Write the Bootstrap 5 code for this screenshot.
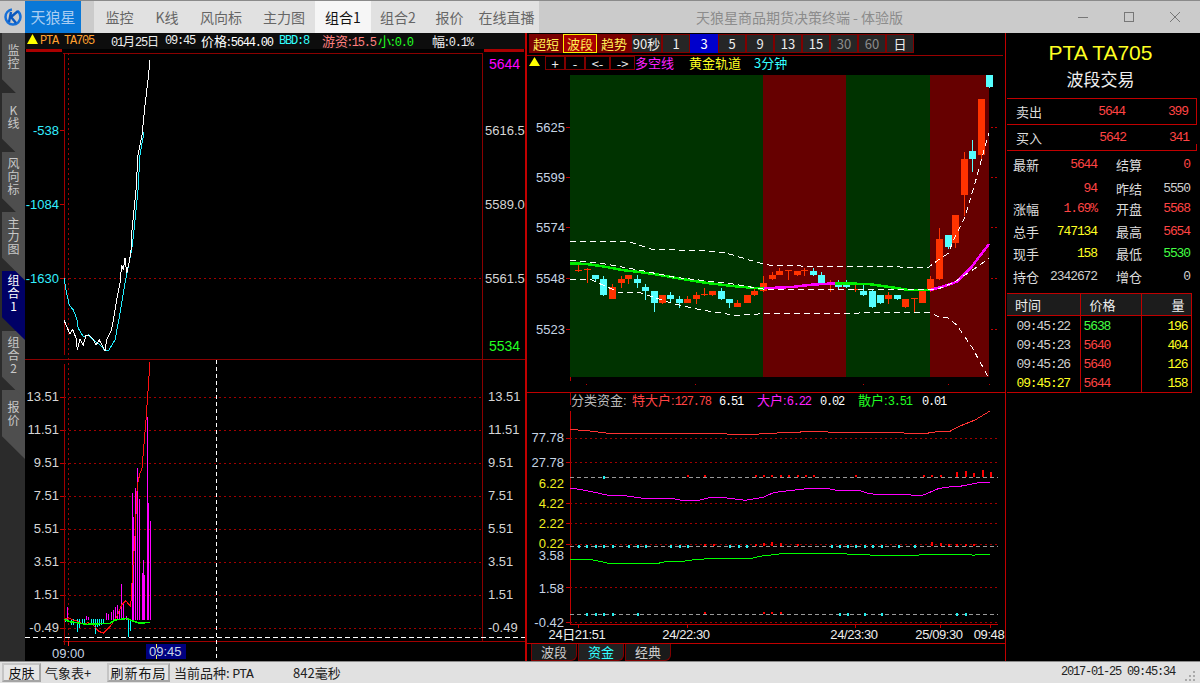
<!DOCTYPE html>
<html lang="zh-CN">
<head>
    <meta charset="UTF-8">
    <title>天狼星商品期货决策终端</title>
    <link href="https://cdn.jsdelivr.net/npm/bootstrap@5.3.0/dist/css/bootstrap.min.css" rel="stylesheet">
    <style>
        html, body { height: 100%; }
        body {
            margin: 0; width: 1200px; height: 683px; overflow: hidden; background: #000;
            font-family: "Liberation Sans", "Noto Sans CJK SC", sans-serif; font-size: 13px;
        }
        .cn { font-family: "Noto Sans CJK SC", "Liberation Sans", sans-serif; }
        .mono { font-family: "Liberation Mono", "Noto Sans CJK SC", monospace; font-size: 13px; letter-spacing: -1.1px; }

        /* title bar */
        .titlebar { height: 33px; background: #cbcbcb; border-top: 1px solid #8a8a8a; flex: none; }
        .logo-box { width: 25px; }
        .brand { width: 56px; background: #0a78d7; color: #a8cdf2; font-size: 15px; line-height: 32px; text-align: center; }
        .top-tabs { margin-left: 13px; background: #e1e1e1; flex-wrap: nowrap; }
        .top-tabs .nav-link { padding: 0; line-height: 32px; color: #666; font-size: 14px; text-align: center; border-radius: 0; }
        .top-tabs .nav-link.active { background: #f6f6f6; color: #111; }
        .t1 { width: 51px; } .t2 { width: 44px; } .t3 { width: 64px; } .t4 { width: 62px; }
        .t5 { width: 56px; } .t6 { width: 54px; } .t7 { width: 49px; } .t8 { width: 65px; }
        .app-title { width: 521px; text-align: center; color: #8c8c8c; font-size: 14px; line-height: 32px; }
        .win-btns { width: 140px; }
        .win-btn { width: 46px; height: 32px; }

        /* left rail */
        .rail { width: 25px; flex: none; background: #2b2b2b; padding-left: 2px; flex-wrap: nowrap; }
        .rail .nav-link {
            height: 69px; margin-bottom: -9.5px; background: #4e4e4e; color: #c8c8c8;
            font-size: 12px; line-height: 13px; text-align: center; padding: 4px 0 0; border-radius: 0;
            clip-path: polygon(0 0, 100% 0, 100% 100%, 0 67%); position: relative;
        }
        .rail .nav-link.active { background: #000066; color: #fff; padding-top: 2px; }
        .rail .rail-two { padding-top: 10px; }
        .rail-z1 { z-index: 7; } .rail-z2 { z-index: 6; } .rail-z3 { z-index: 5; } .rail-z4 { z-index: 4; }
        .rail-z5 { z-index: 3; } .rail-z6 { z-index: 2; } .rail-z7 { z-index: 1; }

        /* left chart panel */
        .left-panel { width: 500px; flex: none; }
        .head-row { height: 16px; background: #0d0d0d; color: #fff; font-size: 13px; line-height: 16px; white-space: nowrap; }
        .head-row .mono { font-size: 12px; letter-spacing: -1.2px; }
        .h-tri { width: 15px; padding-left: 2px; }
        .h-code { width: 71px; color: #ffa030; }
        .h-date { width: 54px; color: #eee; font-size: 12px; }
        .h-time { width: 36px; color: #eee; }
        .h-price { width: 78px; }
        .h-bbd { width: 43px; color: #33ffff; }
        .h-you { width: 56px; color: #ff8080; }
        .h-small { width: 54px; color: #22ff22; }
        .h-fu { color: #eee; }
        svg text { font-family: "Liberation Sans", "Noto Sans CJK SC", sans-serif; font-size: 13px; }
        svg { display: block; }
        .ax { fill: #d5d5d5; }
        .ax-b { fill: #c6d4e4; }
        .ax-y { fill: #f0f020; }
        .ax-c { fill: #33eeff; }
        .ax-x { fill: #eee; letter-spacing: -0.4px; }
        svg .num-s { font-family: "Liberation Mono", monospace; font-size: 12px; letter-spacing: -1.2px; }

        /* right chart panel */
        .mid-panel { width: 481px; flex: none; border-left: 2px solid #c00000; border-right: 1px solid #c00000; }
        .bar-one { height: 22px; padding: 1px 0 0 2px; flex: none; }
        .tf-btn {
            padding: 0; border-radius: 0; height: 19px; line-height: 16px; font-size: 13px; color: #eee; width: 28px;
            background: #262626; border: 1px solid #800000;
        }
        .tf-wide { width: 31px; }
        .tf-off { color: #8c8c8c; }
        .tf-on { background: #0000cc; border-color: #0000cc; color: #fff; }
        .tf-red { background: #7a0000; border-color: #7a0000; color: #ffee55; width: 34px; }
        .tf-sel { background: #aa0000; border-color: #ffee00; color: #ffee55; }
        .bar-two { height: 15px; flex: none; margin-right: 2px; border-top: 1px solid #990000; padding-left: 2px; line-height: 14px; white-space: nowrap; }
        .sm-btn {
            padding: 0; border-radius: 0; width: 20px; height: 14px; line-height: 11px; font-size: 13px; color: #eee;
            background: #000; border: 1px solid #800000;
        }
        .sm-wide { width: 25px; }
        .bar-tri { width: 16px; }
        .l-duo { width: 54px; color: #ff22ff; }
        .l-gold { width: 65px; color: #ffff22; }
        .l-min { color: #33ffff; }
        .bottom-tabs { height: 18px; flex: none; border-top: 1px solid #c00000; padding-left: 4px; gap: 1px; flex-wrap: nowrap; }
        .bottom-tabs .nav-link {
            padding: 0; width: 46px; height: 17px; line-height: 15px; font-size: 13px; text-align: center; color: #ccc;
            background: #1a1a1a; border: 1px solid #800000; border-top: 0; border-radius: 0 0 6px 0;
        }
        .bottom-tabs .nav-link.active { color: #33ffff; background: #222; }

        /* quote column */
        .side-panel { width: 193px; flex: none; color: #ddd; }
        .sym { height: 65px; padding-top: 9px; text-align: center; color: #ffff22; font-family: "Liberation Sans", sans-serif; font-size: 21px; line-height: 22px; padding-right: 4px; }
        .sym-sub { color: #eee; font-family: "Noto Sans CJK SC", sans-serif; font-size: 17px; line-height: 30px; }
        .quote-box { height: 27px; margin: 0 2px 0 1px; border: 1px solid #c00000; border-left: 0; padding: 0 8px 0 9px; line-height: 25px; }
        .quote-two { height: 26px; border-top: 0; border-right: 0; position: relative; }
        .quote-two::after { content: ""; position: absolute; right: 0; bottom: 0; height: 6px; border-right: 1px solid #c00000; }
        .q-val { width: 60px; text-align: right; }
        .q-vol { width: 63px; text-align: right; }
        .red-t { color: #ff4444; }
        .yel-t { color: #ffff22; }
        .grn-t { color: #44ff44; }
        .gry-t { color: #cfcfcf; }
        .stat-grid {
            display: grid; margin-top: 2px; padding-left: 7px; height: 140px; align-items: center;
            grid-template-columns: 34px 50px 53px 40px; grid-template-rows: 24px 24px 16px 30px 14px 32px;
            white-space: nowrap;
        }
        .stat-label2 { padding-left: 19px; }
        .tick-table { width: 184px; margin: 0 0 0 1px; table-layout: fixed; --bs-table-bg: transparent; --bs-table-color: #ddd; }
        .tick-table > :not(caption) > * > * { padding: 2px 0 0; height: 19px; line-height: 17px; border: 1px solid #c00000; border-width: 0 1px 0 0; background: transparent; box-shadow: none; }
        .tick-table thead th { height: 22px; padding: 0; background: #1c1c1c; font-weight: 400; border-width: 1px 1px 1px 0; font-size: 13px; line-height: 20px; color: #eee; }
        .tick-table tbody tr:last-child td { border-bottom-width: 1px; }
        .w-time { width: 73px; } .w-price { width: 61px; } .w-vol { width: 50px; }
        .tick-table td.red-t { color: #ff4444; }
        .tick-table td.yel-t { color: #ffff22; }
        .tick-table td.grn-t { color: #44ff44; }
        .tick-table td.gry-t { color: #cfcfcf; }
        .tick-table thead .h-time-cell { padding-left: 8px; }
        .tick-table thead .h-price-cell { padding-left: 9px; }
        .tick-table thead .h-vol-cell { padding-right: 6px; text-align: right; }
        .cell-time { text-align: center; }
        .tick-table td.cell-price { padding-left: 3px; }
        .tick-table td.cell-vol { text-align: right; padding-right: 3px; }

        /* status bar */
        .statusbar { height: 22px; flex: none; background: #e1e1e1; border-top: 1px solid #8a8a8a; color: #222; font-size: 13px; line-height: 21px; padding-left: 2px; white-space: nowrap; }
        .st-btn { padding: 0; border-radius: 0; height: 19px; line-height: 15px; margin-top: 1px; font-size: 13px; color: #111; background: #e6e6e6; border: 2px solid #a5a5a5; border-left-color: #c5c5c5; border-top-color: #c5c5c5; }
        .st-skin { width: 39px; }
        .st-refresh { width: 63px; letter-spacing: 1px; margin-left: 0; }
        .st-wx { width: 66px; padding-left: 4px; }
        .st-cur { width: 123px; padding-left: 4px; }
        .st-ms { width: 80px; }
        .statusbar .st-clock { margin-left: auto; width: 123px; color: #222; font-size: 12px; letter-spacing: -1.2px; }
    </style>
</head>
<body class="d-flex flex-column">

    <div class="titlebar d-flex">
        <div class="logo-box d-flex align-items-center justify-content-center">
            <svg width="20" height="20" viewBox="0 0 20 20">
                <circle cx="10" cy="10" r="7.5" fill="none" stroke="#1670d8" stroke-width="2.5" stroke-dasharray="34 6"/>
                <path d="M8 5 L6 15 M15 4 L8 10 L13 16" fill="none" stroke="#0a58c0" stroke-width="2.4"/>
            </svg>
        </div>
        <div class="brand cn">天狼星</div>
        <ul class="nav top-tabs cn">
            <li class="nav-item t1"><a class="nav-link" href="#">监控</a></li>
            <li class="nav-item t2"><a class="nav-link" href="#">K线</a></li>
            <li class="nav-item t3"><a class="nav-link" href="#">风向标</a></li>
            <li class="nav-item t4"><a class="nav-link" href="#">主力图</a></li>
            <li class="nav-item t5"><a class="nav-link active" href="#">组合1</a></li>
            <li class="nav-item t6"><a class="nav-link" href="#">组合2</a></li>
            <li class="nav-item t7"><a class="nav-link" href="#">报价</a></li>
            <li class="nav-item t8"><a class="nav-link" href="#">在线直播</a></li>
        </ul>
        <div class="app-title cn">天狼星商品期货决策终端 - 体验版</div>
        <div class="win-btns d-flex">
            <div class="win-btn d-flex align-items-center justify-content-center">
                <svg width="12" height="12"><path d="M1 6.5H11" stroke="#777" fill="none"/></svg>
            </div>
            <div class="win-btn d-flex align-items-center justify-content-center">
                <svg width="12" height="12"><rect x="1.5" y="1.5" width="9" height="9" stroke="#777" fill="none"/></svg>
            </div>
            <div class="win-btn d-flex align-items-center justify-content-center">
                <svg width="12" height="12"><path d="M1 1L11 11M11 1L1 11" stroke="#777" fill="none"/></svg>
            </div>
        </div>
    </div>

    <div class="d-flex flex-grow-1">
        <ul class="nav flex-column rail cn">
            <li class="nav-item"><a class="nav-link rail-z1 rail-two" href="#">监<br>控</a></li>
            <li class="nav-item"><a class="nav-link rail-z2 rail-two" href="#">K<br>线</a></li>
            <li class="nav-item"><a class="nav-link rail-z3" href="#">风<br>向<br>标</a></li>
            <li class="nav-item"><a class="nav-link rail-z4" href="#">主<br>力<br>图</a></li>
            <li class="nav-item"><a class="nav-link active rail-z5" href="#">组<br>合<br>1</a></li>
            <li class="nav-item"><a class="nav-link rail-z6" href="#">组<br>合<br>2</a></li>
            <li class="nav-item"><a class="nav-link rail-z7 rail-two" href="#">报<br>价</a></li>
        </ul>

        <div class="left-panel d-flex flex-column">
            <div class="head-row d-flex cn">
                <span class="h-tri"><svg width="12" height="12"><path d="M0 11L5.5 1L11 11Z" fill="#ffff00"/></svg></span>
                <span class="h-code mono">PTA TA705</span>
                <span class="h-date"><span class="mono">01</span>月<span class="mono">25</span>日</span>
                <span class="h-time mono">09:45</span>
                <span class="h-price">价格:<span class="mono">5644.00</span></span>
                <span class="h-bbd mono">BBD:8</span>
                <span class="h-you">游资:<span class="mono">15.5</span></span>
                <span class="h-small">小:<span class="mono">0.0</span></span>
                <span class="h-fu">幅:<span class="mono">0.1%</span></span>
            </div>
            <svg id="leftChart" width="500" height="612" viewBox="25 49 500 612" shape-rendering="crispEdges">
                <rect x="26" y="49" width="36" height="3" fill="#aa0000"/>
                <rect x="484" y="49" width="40" height="3" fill="#aa0000"/>
                <text class="ax-c" x="59" y="135" text-anchor="end">-538</text>
                <text class="ax-c" x="59" y="209" text-anchor="end">-1084</text>
                <text class="ax-c" x="59" y="283" text-anchor="end">-1630</text>
                <text x="489" y="69" fill="#ff00ff" style="font-size:14px">5644</text>
                <text class="ax" x="485" y="135">5616.5</text>
                <text class="ax" x="485" y="209">5589.0</text>
                <text class="ax" x="485" y="283">5561.5</text>
                <text x="489" y="351" fill="#22ff22" style="font-size:14px">5534</text>
                <text class="ax" x="59" y="401" text-anchor="end">13.51</text>
                <text class="ax" x="59" y="434" text-anchor="end">11.51</text>
                <text class="ax" x="59" y="467" text-anchor="end">9.51</text>
                <text class="ax" x="59" y="500" text-anchor="end">7.51</text>
                <text class="ax" x="59" y="533" text-anchor="end">5.51</text>
                <text class="ax" x="59" y="566" text-anchor="end">3.51</text>
                <text class="ax" x="59" y="599" text-anchor="end">1.51</text>
                <text class="ax" x="59" y="632" text-anchor="end">-0.49</text>
                <text class="ax" x="488" y="401">13.51</text>
                <text class="ax" x="488" y="434">11.51</text>
                <text class="ax" x="488" y="467">9.51</text>
                <text class="ax" x="488" y="500">7.51</text>
                <text class="ax" x="488" y="533">5.51</text>
                <text class="ax" x="488" y="566">3.51</text>
                <text class="ax" x="488" y="599">1.51</text>
                <text class="ax" x="488" y="632">-0.49</text>
                <text class="ax-b" x="52" y="658">09:00</text>
                <rect x="146" y="644" width="40" height="15" fill="#000080"/>
                <text class="ax-b" x="149" y="656">09:45</text>
                <rect x="7" y="645" width="16" height="15" fill="#444" stroke="#999"/>
                <path d="M13 649L18 652.5L13 656Z" fill="#000"/>
                <g id="leftDraw"></g>
            </svg>
        </div>

        <div class="mid-panel d-flex flex-column">
            <div class="bar-one d-flex cn">
                <button class="btn tf-btn tf-red">超短</button>
                <button class="btn tf-btn tf-red tf-sel">波段</button>
                <button class="btn tf-btn tf-red">趋势</button>
                <button class="btn tf-btn tf-wide">90秒</button>
                <button class="btn tf-btn">1</button>
                <button class="btn tf-btn tf-on">3</button>
                <button class="btn tf-btn">5</button>
                <button class="btn tf-btn">9</button>
                <button class="btn tf-btn">13</button>
                <button class="btn tf-btn">15</button>
                <button class="btn tf-btn tf-off">30</button>
                <button class="btn tf-btn tf-off">60</button>
                <button class="btn tf-btn">日</button>
            </div>
            <div class="bar-two d-flex cn">
                <span class="bar-tri"><svg width="12" height="12"><path d="M0 10L5.5 1L11 10Z" fill="#ffff00"/></svg></span>
                <button class="btn sm-btn">+</button>
                <button class="btn sm-btn">-</button>
                <button class="btn sm-btn sm-wide">&lt;-</button>
                <button class="btn sm-btn sm-wide">-&gt;</button>
                <span class="l-duo">多空线</span>
                <span class="l-gold">黄金轨道</span>
                <span class="l-min">3分钟</span>
            </div>
            <svg id="midChart" width="478" height="573" viewBox="527 70 478 573" shape-rendering="crispEdges">
                <rect x="570" y="75" width="193" height="302" fill="#003300"/>
                <rect x="763" y="75" width="83" height="302" fill="#660000"/>
                <rect x="846" y="75" width="84" height="302" fill="#003300"/>
                <rect x="930" y="75" width="59" height="302" fill="#660000"/>
                <text class="ax-b" x="565" y="132" text-anchor="end">5625</text>
                <text class="ax-b" x="565" y="182" text-anchor="end">5599</text>
                <text class="ax-b" x="565" y="232" text-anchor="end">5574</text>
                <text class="ax-b" x="565" y="283" text-anchor="end">5548</text>
                <text class="ax-b" x="565" y="334" text-anchor="end">5523</text>
                <text x="571" y="405" fill="#bbb">分类资金:</text>
                <text x="632" y="405" fill="#ff4444">特大户:<tspan class="num-s">127.78</tspan></text>
                <text x="719" y="405" fill="#fff" class="num-s">6.51</text>
                <text x="757" y="405" fill="#ff22ff">大户:<tspan class="num-s">6.22</tspan></text>
                <text x="820" y="405" fill="#fff" class="num-s">0.02</text>
                <text x="858" y="405" fill="#22ff22">散户:<tspan class="num-s">3.51</tspan></text>
                <text x="922" y="405" fill="#fff" class="num-s">0.01</text>
                <text class="ax-b" x="564" y="442" text-anchor="end">77.78</text>
                <text class="ax-b" x="564" y="467" text-anchor="end">27.78</text>
                <text class="ax-y" x="564" y="488" text-anchor="end">6.22</text>
                <text class="ax-y" x="564" y="508" text-anchor="end">4.22</text>
                <text class="ax-y" x="564" y="528" text-anchor="end">2.22</text>
                <text class="ax-y" x="564" y="548" text-anchor="end">0.22</text>
                <text class="ax-b" x="564" y="560" text-anchor="end">3.58</text>
                <text class="ax-b" x="564" y="593" text-anchor="end">1.58</text>
                <text class="ax-b" x="564" y="627" text-anchor="end">-0.42</text>
                <text class="ax-x" x="577" y="639" text-anchor="middle">24日21:51</text>
                <text class="ax-x" x="686" y="639" text-anchor="middle">24/22:30</text>
                <text class="ax-x" x="854" y="639" text-anchor="middle">24/23:30</text>
                <text class="ax-x" x="939" y="639" text-anchor="middle">25/09:30</text>
                <text class="ax-x" x="989" y="639" text-anchor="middle">09:48</text>
                <g id="midDraw"></g>
            </svg>
            <ul class="nav bottom-tabs cn">
                <li class="nav-item"><a class="nav-link" href="#">波段</a></li>
                <li class="nav-item"><a class="nav-link active" href="#">资金</a></li>
                <li class="nav-item"><a class="nav-link" href="#">经典</a></li>
            </ul>
        </div>

        <div class="side-panel cn">
            <div class="sym">PTA TA705<div class="sym-sub">波段交易</div></div>
            <div class="quote-box d-flex">
                <span class="flex-grow-1">卖出</span>
                <span class="q-val mono red-t">5644</span>
                <span class="q-vol mono red-t">399</span>
            </div>
            <div class="quote-box quote-two d-flex">
                <span class="flex-grow-1">买入</span>
                <span class="q-val mono red-t">5642</span>
                <span class="q-vol mono red-t">341</span>
            </div>
            <div class="stat-grid">
                <span>最新</span><span class="mono red-t text-end">5644</span><span class="stat-label2">结算</span><span class="mono red-t text-end">0</span>
                <span></span><span class="mono red-t text-end">94</span><span class="stat-label2">昨结</span><span class="mono gry-t text-end">5550</span>
                <span>涨幅</span><span class="mono red-t text-end">1.69%</span><span class="stat-label2">开盘</span><span class="mono red-t text-end">5568</span>
                <span>总手</span><span class="mono yel-t text-end">747134</span><span class="stat-label2">最高</span><span class="mono red-t text-end">5654</span>
                <span>现手</span><span class="mono yel-t text-end">158</span><span class="stat-label2">最低</span><span class="mono grn-t text-end">5530</span>
                <span>持仓</span><span class="mono gry-t text-end">2342672</span><span class="stat-label2">增仓</span><span class="mono gry-t text-end">0</span>
            </div>
            <table class="table tick-table">
                <colgroup><col class="w-time"><col class="w-price"><col class="w-vol"></colgroup>
                <thead>
                    <tr><th class="h-time-cell">时间</th><th class="h-price-cell">价格</th><th class="h-vol-cell">量</th></tr>
                </thead>
                <tbody class="mono">
                    <tr><td class="cell-time gry-t">09:45:22</td><td class="cell-price grn-t">5638</td><td class="cell-vol yel-t">196</td></tr>
                    <tr><td class="cell-time gry-t">09:45:23</td><td class="cell-price red-t">5640</td><td class="cell-vol yel-t">404</td></tr>
                    <tr><td class="cell-time gry-t">09:45:26</td><td class="cell-price red-t">5640</td><td class="cell-vol yel-t">126</td></tr>
                    <tr><td class="cell-time yel-t">09:45:27</td><td class="cell-price red-t">5644</td><td class="cell-vol yel-t">158</td></tr>
                </tbody>
            </table>
        </div>
    </div>

    <div class="statusbar d-flex cn">
        <button class="btn st-btn st-skin">皮肤</button>
        <span class="st-wx">气象表+</span>
        <button class="btn st-btn st-refresh">刷新布局</button>
        <span class="st-cur">当前品种: <span class="mono">PTA</span></span>
        <span class="st-ms">842毫秒</span>
        <span class="st-clock mono">2017-01-25 09:45:34</span>
        <svg class="me-1 mt-2" width="12" height="12"><path d="M9 1h2v2H9zM5 5h2v2H5zM9 5h2v2H9zM1 9h2v2H1zM5 9h2v2H5zM9 9h2v2H9z" fill="#aaa"/></svg>
    </div>

    <script src="https://cdn.jsdelivr.net/npm/bootstrap@5.3.0/dist/js/bootstrap.bundle.min.js"></script>
    <script>
        // chart shapes, coordinates measured off the screenshot
        function line(pts, ox, oy, color, w, dash) {
            var p = pts.map(function (q) { return (ox + q[0] / 3).toFixed(1) + ',' + (oy + q[1] / 3).toFixed(1); }).join(' ');
            return '<polyline points="' + p + '" fill="none" stroke="' + color + '" stroke-width="' + (w || 1) + '"' +
                (dash ? ' stroke-dasharray="' + dash + '"' : '') + '/>';
        }
        function rect(x, y, w, h, c) {
            return '<rect x="' + x + '" y="' + y + '" width="' + w + '" height="' + h + '" fill="' + c + '"/>';
        }
        function hdots(y, x1, x2) { return line([[x1 * 3, y * 3], [x2 * 3, y * 3]], 0, 0.5, '#a00000', 1, '2 3'); }

        // left chart
        var out = '';
        out += rect(63, 53, 419, 1, '#8a0000') + rect(482, 53, 1, 588, '#8a0000');
        out += rect(64, 53, 1, 302, '#a00000') + rect(64, 364, 1, 281, '#a00000');
        out += rect(25, 359, 500, 1, '#8a0000') + rect(63, 641, 462, 1, '#a00000');
        out += line([[68 * 3, 53 * 3], [68 * 3, 641 * 3]], 0, 0, '#a00000', 1, '2 3');
        out += hdots(278, 64, 482);
        [130, 204, 278, 397, 430, 463, 496, 529, 562, 595, 628].forEach(function (y) {
            if (y > 360) out += hdots(y, 64, 482);
            out += rect(60, y, 4, 1, '#c00000');
        });
        out += line([[216 * 3, 360 * 3], [216 * 3, 661 * 3]], 0, 0, '#fff', 1, '4 3');
        out += line([[25 * 3, 637 * 3], [525 * 3, 637 * 3]], 0, 0, '#fff', 1, '5 3');
        out += rect(68, 641, 1, 5, '#ff2020') + rect(156, 644, 1, 4, '#ffee55') + rect(156, 655, 1, 4, '#ffee55');

        var white = [[12,270],[20,290],[30,312],[38,298],[48,325],[52,360],[60,328],[70,345],[78,315],[88,315],[100,328],[108,345],[118,330],[128,350],[135,362],[140,330],[155,298],[165,240],[172,200],[180,160],[185,105],[190,120],[195,85],[200,130],[208,95],[213,60],[216,0],[228,-120],[234,-225],[246,-285],[255,-375],[264,-450],[270,-510]];
        var cyan = [[12,145],[18,180],[28,225],[40,240],[50,265],[55,295],[70,320],[85,315],[100,330],[115,340],[125,350],[135,362],[147,360],[165,330],[180,250],[195,160],[205,110],[215,60],[222,0],[234,-120],[240,-225],[252,-294]];
        out += line(cyan, 60, 230, '#22eeff') + line(white, 60, 230, '#fff');

        var mag = [[22,410],[78,438],[85,442],[138,428],[145,432],[152,425],[158,420],[164,410],[172,405],[178,418],[184,342],[190,400],[198,438],[217,70],[220,140],[226,55],[232,-6],[238,88],[245,310],[248,270],[253,315],[260,-160],[265,100],[271,153]];
        mag.forEach(function (b) {
            var y = Math.round(470 + b[1] / 3);
            out += rect(Math.round(60 + b[0] / 3), y, 1, 620 - y, '#ff00ff');
        });
        var cy = [[16,455],[32,465],[38,465],[52,485],[58,475],[65,460],[72,458],[92,458],[98,465],[106,492],[112,470],[118,468],[124,465],[130,462],[205,500],[211,483]];
        cy.forEach(function (b) {
            out += rect(Math.round(60 + b[0] / 3), 619, 1, Math.round(470 + b[1] / 3) - 619, '#00ffff');
        });
        out += line([[15,448],[25,443],[40,450],[50,452],[70,462],[85,458],[100,465],[115,483],[130,490],[150,470],[170,440],[185,405],[197,392],[212,410],[218,300],[225,200],[232,45],[240,10],[246,-5],[258,-150],[270,-324]], 60, 470, '#ff1010');
        out += line([[12,448],[30,455],[60,460],[80,463],[100,462],[150,460],[165,450],[190,447],[200,445],[215,452],[240,460],[255,458],[270,457]], 60, 470, '#00ff00', 1.5);
        document.getElementById('leftDraw').innerHTML = out;

        // candles: x, body top, body bottom, wick top, wick bottom, red?
        var early = [[160,90,93,72,96,1],[185,88,91,85,130,1],[211,105,118,105,125,0],[235,117,165,108,168,0],[262,141,177,132,178,1],[287,117,130,108,143,1],[310,105,117,105,132,1],[337,117,130,105,143,0],[361,141,153,132,180,0],[386,153,189,153,215,0],[412,165,189,165,191,1],[436,165,177,156,190,0],[462,177,189,168,204,0],[487,177,189,168,190,1],[512,165,177,156,191,1],[537,163,165,144,167,1],[562,153,165,153,167,1],[589,153,177,144,180,0],[613,177,189,177,204,0],[637,189,201,180,202,1],[665,165,189,165,190,1],[688,153,165,145,167,1],[715,129,153,108,155,1],[740,105,117,96,120,1],[763,93,105,84,106,1],[790,90,92,90,120,1],[815,93,105,93,107,1],[838,90,92,84,107,1],[865,93,105,84,107,0],[889,105,129,96,132,0],[916,127,129,120,155,1],[940,129,141,120,146,0],[964,129,141,120,144,0],[990,147,150,129,155,1],[1015,153,165,132,168,0],[1042,153,201,147,204,0],[1066,165,189,165,192,0],[1090,165,177,156,192,1],[1117,165,177,165,180,0],[1141,177,201,177,203,1],[1168,174,177,174,216,1],[1192,153,189,150,190,1],[1216,117,153,108,155,1]];
        var late = [[178,537,657,504,660,1],[203,525,561,525,567,0],[226,465,549,465,564,1],[253,297,405,276,468,1],[277,273,297,240,336,0],[304,117,285,117,300,1],[328,45,81,45,84,0]];
        var m = '';
        [127, 177, 227, 278, 329].forEach(function (y) {
            m += rect(566, y, 4, 1, '#c00000') + line([[991 * 3, y * 3], [998 * 3, y * 3]], 0, 0, '#c00000', 1, '2 2');
        });
        function candle(c, ox, oy) {
            var x = Math.round(ox + c[0] / 3), col = c[5] ? '#ff3300' : '#55ffff';
            var t = Math.round(oy + c[1] / 3), b = Math.round(oy + c[2] / 3);
            var wt = Math.round(oy + c[3] / 3), wb = Math.round(oy + c[4] / 3);
            return rect(x, wt, 1, wb - wt, col) + rect(x - 3, t, 7, Math.max(b - t, 1), col);
        }
        early.forEach(function (c) { m += candle(c, 525, 240); });
        late.forEach(function (c) { m += candle(c, 880, 60); });

        // moving average, green then magenta stretches
        m += line([[135,70],[185,72],[240,80],[290,90],[350,97],[400,104],[460,115],[540,128],[620,138],[700,145],[716,145]], 525, 240, '#00ee00', 2.5);
        m += line([[716,145],[800,141],[860,134],[930,130]], 525, 240, '#ff00ff', 2.5);
        m += line([[930,130],[1030,132],[1100,142],[1150,150],[1215,150]], 525, 240, '#00ee00', 2.5);
        m += line([[1215,150],[1260,138],[1295,125],[1340,80],[1392,12]], 525, 240, '#ff00ff', 2.5);

        // bands
        var dash = '6 4';
        m += line([[135,60],[240,72],[330,88],[450,112],[610,130],[700,145],[720,148],[1210,150],[1240,147],[1290,125]], 525, 240, '#fff', 1, dash);
        m += line([[1290,125],[1320,105],[1350,85],[1392,55]], 525, 240, '#fff', 1, dash);
        m += line([[135,118],[200,120],[280,156],[340,156],[380,170],[440,190],[530,210],[630,226],[700,222],[1215,217],[1240,230],[1270,234],[1295,255],[1340,320],[1392,415]], 525, 240, '#fff', 1, dash);
        m += line([[135,5],[220,3],[305,3],[380,28],[530,32],[600,38],[700,68],[740,77],[1210,82],[1240,60],[1270,40],[1290,-10],[1320,-70],[1350,-170],[1380,-280],[1392,-320]], 525, 240, '#fff', 1, dash);

        // money flow
        m += rect(527, 392, 478, 1, '#c00000') + rect(570, 393, 1, 12, '#a00000');
        m += rect(570, 377, 1, 4, '#c00000');
        [586, 695, 863, 948, 989].forEach(function (x) { m += rect(x, 384, 1, 1, '#c00000'); });
        m += rect(570, 411, 1, 214, '#c00000') + rect(570, 624, 428, 1, '#c00000');
        [578, 687, 855, 940, 990].forEach(function (x) { m += rect(x, 625, 1, 3, '#c00000'); });
        [438, 462, 503, 523, 544, 587, 622].forEach(function (y) {
            m += hdots(y, 570, 998) + rect(566, y, 4, 1, '#c00000');
        });
        [477, 546, 614].forEach(function (y) {
            m += line([[570 * 3, y * 3], [998 * 3, y * 3]], 0, 0, '#999', 1, '4 3');
        });
        m += line([[136,118],[195,123],[250,130],[450,131],[475,129],[500,132],[525,130],[600,130],[610,133],[700,133],[705,130],[755,130],[760,127],[825,127],[830,124],[905,124],[910,127],[1130,127],[1140,130],[1205,130],[1235,125],[1275,124],[1300,110],[1350,90],[1395,63]], 525, 390, '#ff3333');
        m += line([[136,295],[165,298],[200,305],[250,316],[300,317],[355,325],[440,325],[470,331],[520,331],[550,324],[600,323],[660,331],[715,322],[745,308],[775,304],[830,298],[855,295],[905,295],[935,301],[1000,301],[1030,310],[1060,314],[1105,314],[1130,313],[1170,316],[1195,315],[1240,296],[1260,292],[1305,289],[1345,281],[1365,277],[1395,277]], 525, 390, '#ff00ff');
        m += line([[136,508],[195,508],[220,513],[250,520],[400,520],[425,514],[475,514],[500,510],[550,506],[680,505],[705,499],[780,490],[955,490],[965,492],[1055,496],[1180,496],[1185,493],[1335,493],[1345,496],[1360,493],[1395,493]], 525, 390, '#00ff00');
        function redBars(list, base) {
            list.forEach(function (b) {
                var x = Math.round(525 + b[0] / 3), y = Math.round(390 + b[1] / 3);
                m += rect(x, y, 2, base - y, '#ff0000');
            });
        }
        function dots(list, base) {
            list.forEach(function (z) { m += rect(Math.round(525 + z / 3), base - 1, 2, 3, '#22eeee'); });
        }
        redBars([[487,255],[537,255],[690,255],[715,255],[738,255],[765,255],[789,255],[816,255],[840,255],[863,255],[990,255],[1194,255],[1219,255],[1245,255],[1292,246],[1320,243],[1344,249],[1371,240],[1395,246]], 477);
        dots([234], 477);
        redBars([[537,462],[564,462],[690,462],[715,458],[738,456],[765,459],[816,462],[1219,456],[1245,459],[1270,462],[1292,462],[1320,462],[1344,462]], 546);
        dots([160,183,210,234,261,309,336,360,435,462,486,611,638,662,918,942,966,990,1017,1041,1068,1119,1167], 546);
        redBars([[537,666],[715,666],[738,666],[765,666]], 614);
        dots([183,210,234,261,336,942,966,1017,1068,1292,1320], 614);
        document.getElementById('midDraw').innerHTML = m;
    </script>
</body>
</html>
